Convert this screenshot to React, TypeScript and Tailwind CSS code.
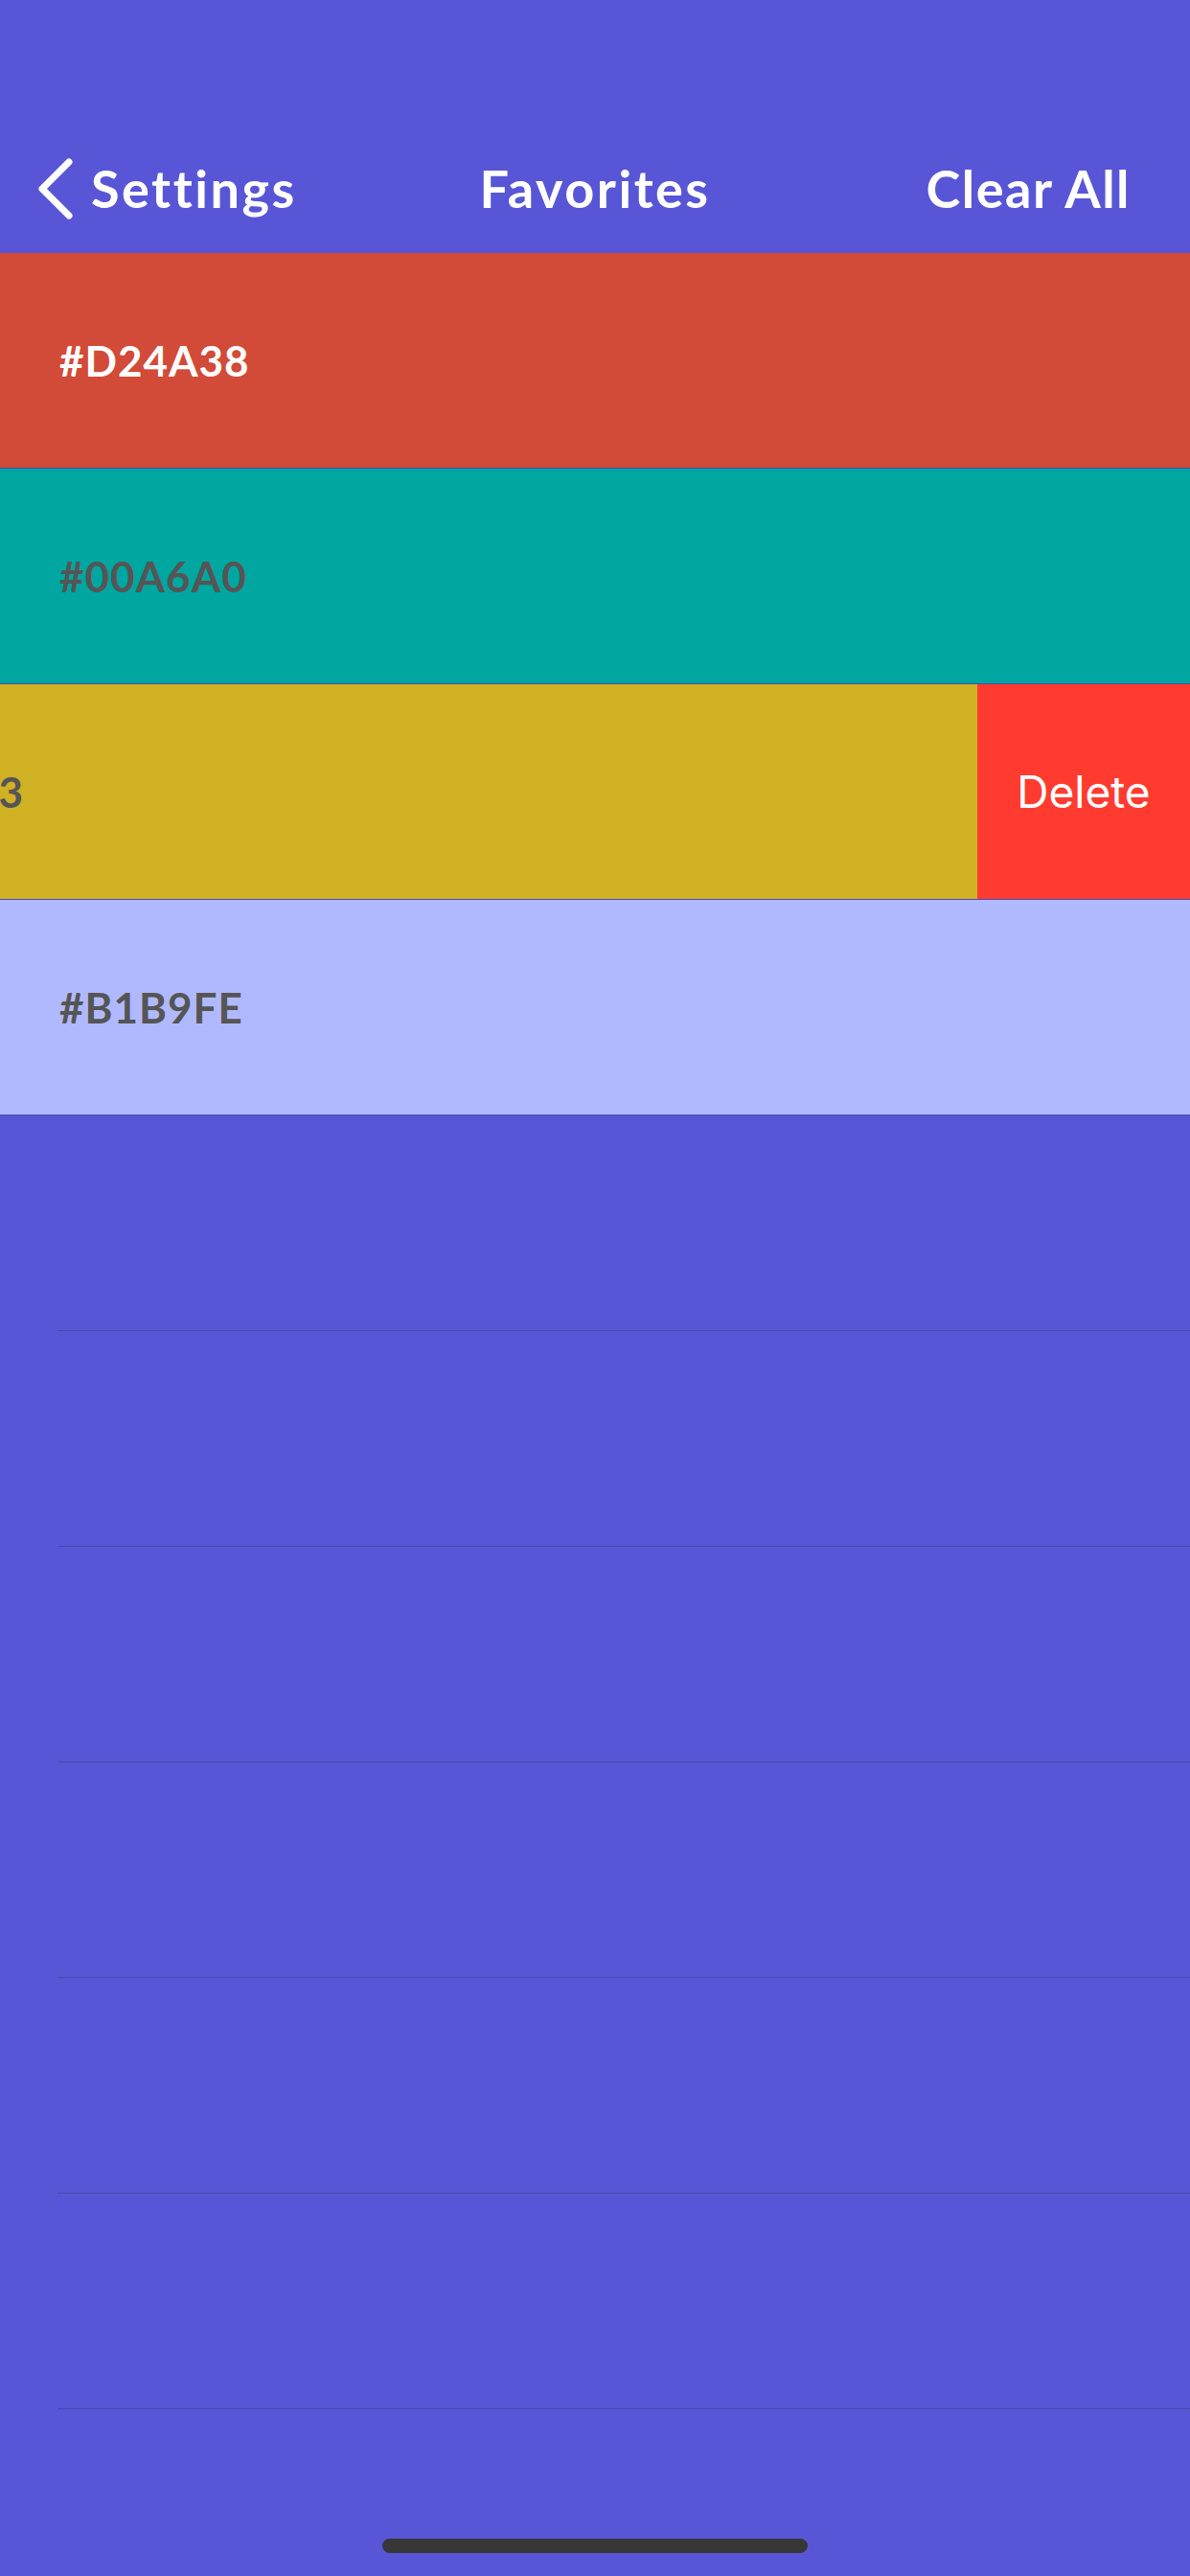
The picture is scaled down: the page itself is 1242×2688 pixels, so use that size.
import React from "react";

const favorites = [
  { hex: "#D24A38", bg: "bg-[#d24a38]", text: "text-white" },
  { hex: "#00A6A0", bg: "bg-[#00a6a0]", text: "text-[#555555]" },
  { hex: "#D0B123", bg: "bg-[#d0b123]", text: "text-[#555555]", swiped: true },
  { hex: "#B1B9FE", bg: "bg-[#b1b9fe]", text: "text-[#555555]" },
];

const emptyRows = [0, 1, 2, 3, 4, 5, 6];

const heading = "font-['Lato',sans-serif] font-bold text-[54px] leading-none text-white";

const App = () => (
  <div className="w-[1242px] h-[2688px] bg-[#5856d6] overflow-hidden relative">
    {/* nav bar */}
    <header className="h-[264px] pt-[147px]">
      <div className="grid grid-cols-[1fr_auto_1fr] items-center h-[100px]">
        <button className="justify-self-start ml-[39px] flex items-center gap-[18px]">
          <svg width="38" height="64" viewBox="0 0 38 64" fill="none">
            <path d="M33 4 L5 32 L33 60" stroke="white" strokeWidth="7" strokeLinecap="round" strokeLinejoin="round" />
          </svg>
          <span className={`${heading} tracking-[2.5px]`}>Settings</span>
        </button>
        <h1 className={`${heading} tracking-[2.5px]`}>Favorites</h1>
        <button className={`justify-self-end mr-[62px] ${heading} tracking-[1.5px]`}>Clear All</button>
      </div>
    </header>

    {/* favorites list */}
    <div className="flex flex-col">
      {favorites.map((f) => (
        <div key={f.hex} className="h-[225px] flex overflow-hidden border-b border-black/15">
          <div
            className={`w-[1242px] shrink-0 flex items-center ${f.bg} ${
              f.swiped ? "-ml-[222px] pl-[50px]" : "pl-[62px]"
            }`}
          >
            <span className={`font-['Lato',sans-serif] font-bold text-[44px] tracking-[1px] whitespace-nowrap ${f.text}`}>
              {f.hex}
            </span>
          </div>
          {f.swiped && (
            <button className="w-[222px] shrink-0 bg-[#ff3b30] flex items-center justify-center font-['Inter',sans-serif] text-[46px] text-white">
              Delete
            </button>
          )}
        </div>
      ))}
      {emptyRows.map((i) => (
        <div key={i} className="h-[225px] pl-[60px] flex flex-col justify-end">
          <div className="h-px bg-[#4a4aa8]" />
        </div>
      ))}
    </div>

    {/* home indicator */}
    <div className="absolute left-[399px] top-[2649px] w-[444px] h-[15px] rounded-full bg-[#373737]" />
  </div>
);

export default App;
